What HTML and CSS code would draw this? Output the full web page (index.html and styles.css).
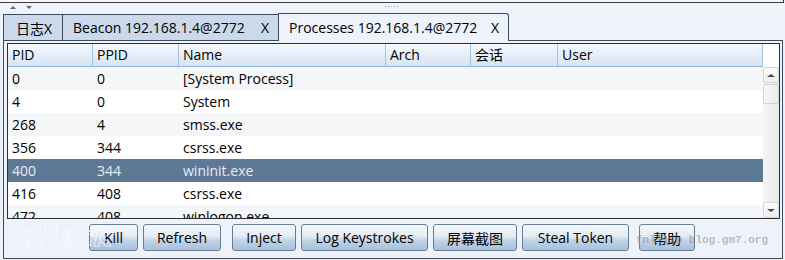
FILE: index.html
```html
<!DOCTYPE html>
<html>
<head>
    <meta charset="utf-8">
    <title>Processes</title>
    <link rel="stylesheet" href="styles.css">
</head>
<body>
    <div class="top-pane"></div>

    <div class="splitter">
        <span class="arrow-up"></span>
        <span class="arrow-down"></span>
        <span class="grip"></span>
    </div>

    <div class="tabs">
        <div class="tab tab-log">日志X</div>
        <div class="tab tab-beacon">
            <span>Beacon 192.168.1.4@2772</span>
            <span>X</span>
        </div>
        <div class="tab tab-active">
            <span>Processes 192.168.1.4@2772</span>
            <span>X</span>
        </div>
    </div>

    <div class="panel">
        <div class="table">
            <div class="table-body">
                <div class="row head">
                    <div class="cell">PID</div>
                    <div class="cell">PPID</div>
                    <div class="cell">Name</div>
                    <div class="cell">Arch</div>
                    <div class="cell">会话</div>
                    <div class="cell">User</div>
                </div>
                <div class="row alt">
                    <div class="cell">0</div>
                    <div class="cell">0</div>
                    <div class="cell">[System Process]</div>
                    <div class="cell"></div>
                    <div class="cell"></div>
                    <div class="cell"></div>
                </div>
                <div class="row">
                    <div class="cell">4</div>
                    <div class="cell">0</div>
                    <div class="cell">System</div>
                    <div class="cell"></div>
                    <div class="cell"></div>
                    <div class="cell"></div>
                </div>
                <div class="row alt">
                    <div class="cell">268</div>
                    <div class="cell">4</div>
                    <div class="cell">smss.exe</div>
                    <div class="cell"></div>
                    <div class="cell"></div>
                    <div class="cell"></div>
                </div>
                <div class="row">
                    <div class="cell">356</div>
                    <div class="cell">344</div>
                    <div class="cell">csrss.exe</div>
                    <div class="cell"></div>
                    <div class="cell"></div>
                    <div class="cell"></div>
                </div>
                <div class="row selected">
                    <div class="cell">400</div>
                    <div class="cell">344</div>
                    <div class="cell">wininit.exe</div>
                    <div class="cell"></div>
                    <div class="cell"></div>
                    <div class="cell"></div>
                </div>
                <div class="row">
                    <div class="cell">416</div>
                    <div class="cell">408</div>
                    <div class="cell">csrss.exe</div>
                    <div class="cell"></div>
                    <div class="cell"></div>
                    <div class="cell"></div>
                </div>
                <div class="row alt">
                    <div class="cell">472</div>
                    <div class="cell">408</div>
                    <div class="cell">winlogon.exe</div>
                    <div class="cell"></div>
                    <div class="cell"></div>
                    <div class="cell"></div>
                </div>
            </div>

            <div class="scrollbar">
                <div class="scroll-track">
                    <div class="scroll-btn"><span class="tri-up"></span></div>
                    <div class="scroll-thumb"></div>
                    <div class="scroll-space"></div>
                    <div class="scroll-btn"><span class="tri-down"></span></div>
                </div>
            </div>
        </div>

        <div class="buttons">
            <button class="button">Kill</button>
            <button class="button">Refresh</button>
            <button class="button">Inject</button>
            <button class="button">Log Keystrokes</button>
            <button class="button">屏幕截图</button>
            <button class="button">Steal Token</button>
            <button class="button">帮助</button>
        </div>

        <svg class="mark-left" width="124" height="30" viewBox="0 0 124 30">
            <text x="2" y="25">dHack</text>
        </svg>
        <div class="mark-right">fnlliso blog.gm7.org</div>
    </div>
</body>
</html>
```

FILE: styles.css
```css
:root {
    --bg: #eef2fa;
    --frame: #3b4a5a;
    --tab: #cbd9ea;
    --head-line: #a6c2e1;
    --row-alt: #f5f6f8;
    --selected: #5d7996;
    --selected-text: #e8edf3;
}

* {
    margin: 0;
    padding: 0;
    box-sizing: border-box;
}

body {
    width: 785px;
    height: 260px;
    overflow: hidden;
    background-color: var(--bg);
    font-family: 'Open Sans', 'Noto Sans CJK SC', sans-serif;
    font-size: 14px;
    color: #000;
}

/* upper pane edge + splitter */
.top-pane {
    width: 784px;
    height: 3px;
    background-color: #f6f7f9;
    border-bottom: 1px solid #3c3c3c;
    border-right: 1px solid #3c3c3c;
}

.splitter {
    position: relative;
    height: 10px;
}

.arrow-up,
.arrow-down {
    position: absolute;
    top: 3px;
    width: 0;
    height: 0;
    border-left: 3px solid transparent;
    border-right: 3px solid transparent;
}

.arrow-up {
    left: 10px;
    border-bottom: 3px solid #666;
}

.arrow-down {
    left: 26px;
    border-top: 3px solid #666;
}

.grip {
    position: absolute;
    left: 384px;
    top: 2px;
    width: 15px;
    height: 3px;
    background-image: radial-gradient(circle, #9aa3ad 0.8px, transparent 1px);
    background-size: 3px 3px;
}

/* tabs */
.tabs {
    display: flex;
    align-items: flex-end;
    height: 27px;
    margin-left: 3px;
}

.tab {
    display: flex;
    align-items: center;
    justify-content: space-between;
    height: 26px;
    padding: 0 9px 0 10px;
    background-color: var(--tab);
    border: 1px solid var(--frame);
    border-bottom: none;
    white-space: nowrap;
}

.tab-log {
    width: 60px;
    padding-left: 12px;
}

.tab-beacon {
    width: 215px;
    border-left: none;
    border-right: none;
}

.tab-active {
    position: relative;
    z-index: 1;
    width: 231px;
    height: 28px;
    margin-bottom: -1px;
    padding-bottom: 1px;
    background-color: var(--bg);
    border-top-right-radius: 3px;
}

/* panel */
.panel {
    position: relative;
    width: 780px;
    height: 219px;
    margin-left: 3px;
    padding: 2px 2px 0 3px;
    border: 1px solid var(--frame);
    background-color: var(--bg);
}

.table {
    display: flex;
    height: 176px;
    background-color: #fff;
    border: 1px solid #2e2e2e;
    overflow: hidden;
}

.table-body {
    width: 755px;
}

.row {
    display: grid;
    grid-template-columns: 85px 86px 207px 85px 87px 205px;
    height: 23px;
    line-height: 23px;
    background-color: #fff;
}

.row.alt {
    background-color: var(--row-alt);
}

.row.selected {
    background-color: var(--selected);
    color: var(--selected-text);
}

.cell {
    padding-left: 4px;
    white-space: nowrap;
    overflow: hidden;
}

.row.head {
    line-height: 22px;
    background: linear-gradient(to bottom, #f5f8fd, #d6e4f3);
    border-bottom: 1px solid #90b3d9;
}

.row.head .cell {
    border-right: 1px solid var(--head-line);
}

/* scrollbar */
.scrollbar {
    width: 16px;
    padding-top: 23px;
    background-color: #fff;
}

.scroll-track {
    display: flex;
    flex-direction: column;
    height: 151px;
    background: linear-gradient(to right, #f6f6f6, #e9e9e9);
}

.scroll-btn {
    display: flex;
    align-items: center;
    justify-content: center;
    height: 16px;
    background: linear-gradient(to bottom, #fdfdfd, #ededed);
    border: 1px solid #d6d6d6;
    border-radius: 2px;
}

.scroll-thumb {
    height: 20px;
    margin-top: 1px;
    background: linear-gradient(to right, #f7f7f7, #ececec);
    border: 1px solid #d0d0d0;
    border-radius: 2px;
}

.scroll-space {
    flex: 1;
}

.tri-up,
.tri-down {
    width: 0;
    height: 0;
    border-left: 4px solid transparent;
    border-right: 4px solid transparent;
}

.tri-up {
    border-bottom: 3px solid #4a4a4a;
}

.tri-down {
    border-top: 3px solid #4a4a4a;
}

/* buttons */
.buttons {
    display: flex;
    gap: 5px;
    margin-top: 5px;
    padding-left: 82px;
}

.button {
    height: 27px;
    font-family: inherit;
    font-size: 14px;
    color: #000;
    background: linear-gradient(to bottom, #f6f9fc 0%, #e3ebf5 45%, #c3d4e8 60%, #a8c0dc 100%);
    border: 1px solid #687e97;
    border-radius: 3px;
    cursor: pointer;
}

.button:nth-child(1) { width: 49px; }
.button:nth-child(2) { width: 78px; }
.button:nth-child(3) { width: 64px; margin-left: 6px; }
.button:nth-child(4) { width: 127px; }
.button:nth-child(5) { width: 84px; }
.button:nth-child(6) { width: 107px; }
.button:nth-child(7) { width: 56px; margin-left: 5px; }

/* watermarks */
.mark-left {
    position: absolute;
    left: 11px;
    top: 180px;
}

.mark-left text {
    font-family: 'DejaVu Sans', sans-serif;
    font-size: 27px;
    font-weight: bold;
    font-style: italic;
    fill: none;
    stroke: #fff;
    stroke-width: 1;
    stroke-dasharray: 2 1.5;
}

.mark-right {
    position: absolute;
    left: 632px;
    top: 193px;
    font-family: 'Liberation Mono', monospace;
    font-size: 11px;
    font-weight: bold;
    color: rgba(140, 140, 140, 0.55);
    white-space: nowrap;
}
```
